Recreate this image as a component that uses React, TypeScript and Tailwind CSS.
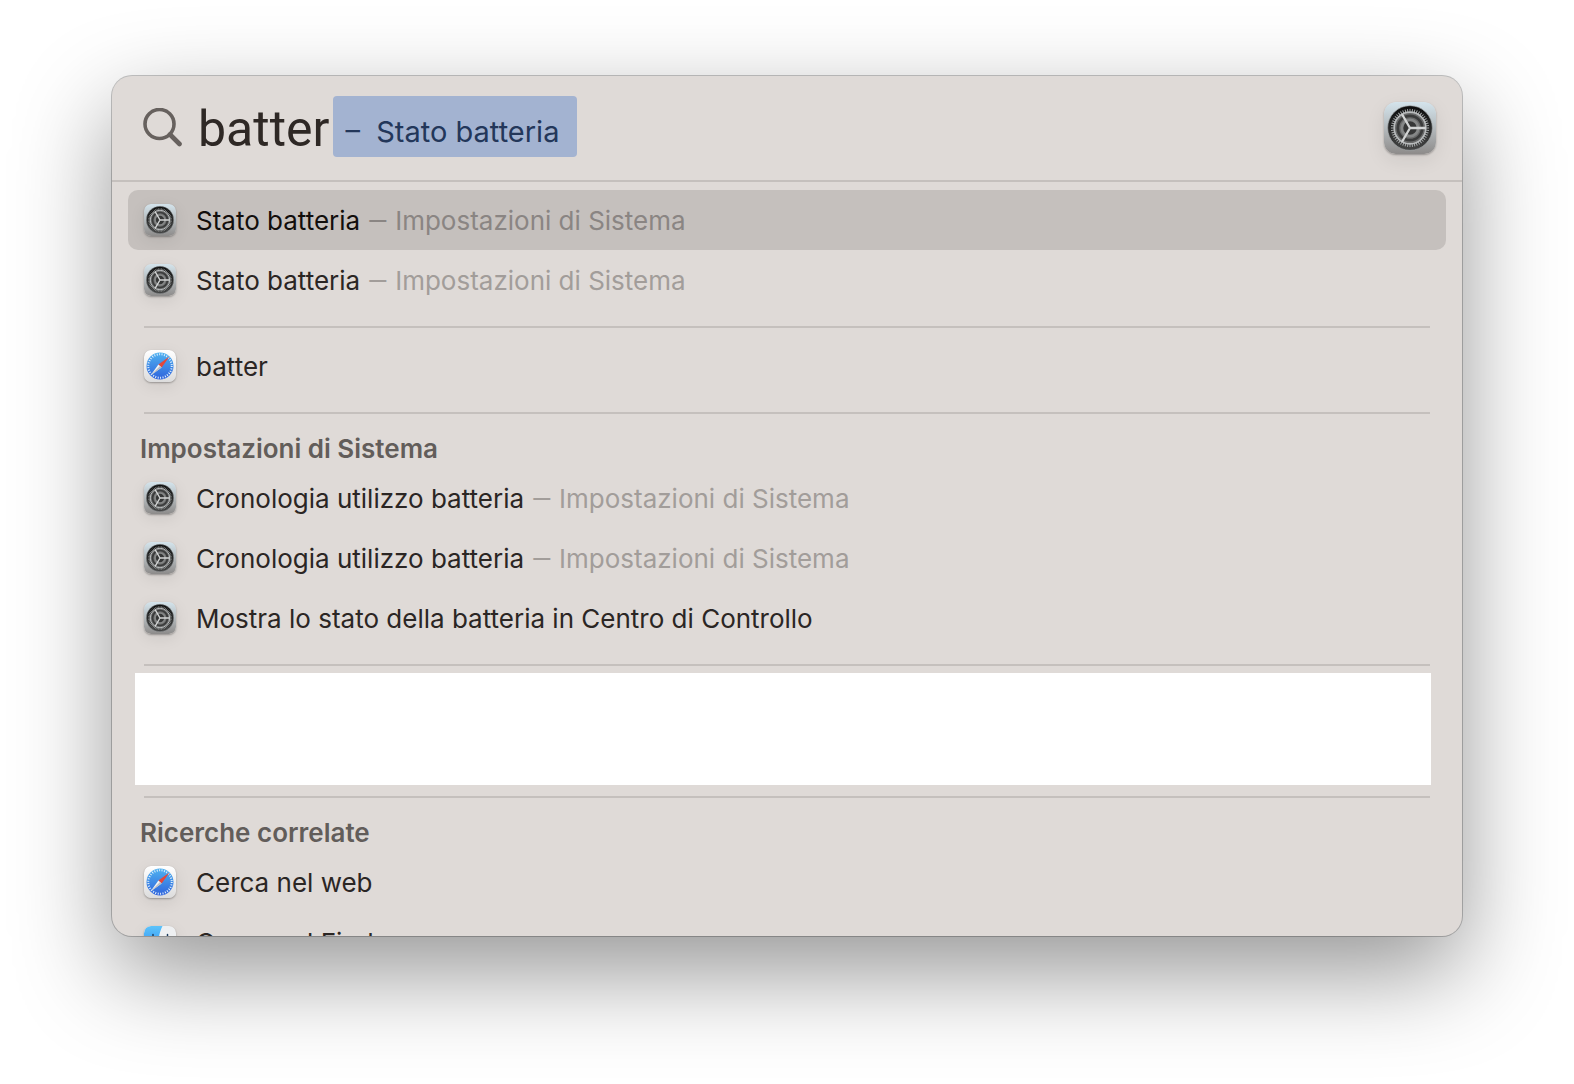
import { useId, useState } from "react";

const teeth = Array.from({ length: 48 }, (_, i) => (i * 360) / 48);

function SettingsIcon({ className }: { className: string }) {
  const id = useId();
  return (
    <svg viewBox="0 0 64 64" className={className} aria-hidden="true">
      <defs>
        <linearGradient id={id + "a"} x1="0" y1="0" x2="0" y2="1">
          <stop offset="0" stopColor="#d4e4ec" />
          <stop offset="0.5" stopColor="#b4babd" />
          <stop offset="1" stopColor="#8d8b8a" />
        </linearGradient>
        <linearGradient id={id + "b"} x1="0" y1="0" x2="0" y2="1">
          <stop offset="0" stopColor="#0c0d0d" />
          <stop offset="1" stopColor="#454646" />
        </linearGradient>
      </defs>
      <rect width="64" height="64" rx="14" fill={"url(#" + id + "a)"} />
      <circle cx="32" cy="32" r="27.500" fill={"url(#" + id + "b)"} stroke="#a5aaac" strokeWidth="0.8" />
      {teeth.map((angle) => (
        <path key={angle} d="M32 8.500V12" stroke="#a9acad" strokeWidth="1.2" transform={"rotate(" + angle + " 32 32)"} />
      ))}
      <circle cx="32" cy="32" r="19.500" fill="#6a6b6b" stroke="#b9bcbd" strokeWidth="2" />
      <circle cx="32" cy="32" r="15" fill="none" stroke="#3a3b3b" strokeWidth="3.4" />
      <circle cx="32" cy="32" r="10" fill="#363737" stroke="#858787" strokeWidth="3.4" />
      <path d="M32 32H51.500M32 32L22.200 15.100M32 32L22.200 48.900" stroke="#d2d4d4" strokeWidth="2.8" />
    </svg>
  );
}

function SafariIcon({ className }: { className: string }) {
  const id = useId();
  return (
    <svg viewBox="0 0 64 64" className={className} aria-hidden="true">
      <defs>
        <linearGradient id={id + "a"} x1="0" y1="0" x2="0" y2="1">
          <stop offset="0" stopColor="#ffffff" />
          <stop offset="1" stopColor="#dcdcdc" />
        </linearGradient>
        <linearGradient id={id + "b"} x1="0" y1="0" x2="0" y2="1">
          <stop offset="0" stopColor="#4fb2f0" />
          <stop offset="1" stopColor="#2f63dc" />
        </linearGradient>
      </defs>
      <rect width="64" height="64" rx="14" fill={"url(#" + id + "a)"} />
      <circle cx="32" cy="32" r="27" fill={"url(#" + id + "b)"} />
      <circle cx="32" cy="32" r="23.500" fill="none" stroke="#e3f0fc" strokeWidth="4" strokeDasharray="2 2.922" />
      <path d="M51 13L28.800 28.800L35.200 35.200Z" fill="#e5473a" />
      <path d="M13 51L28.800 28.800L35.200 35.200Z" fill="#f4f4f4" />
      <path d="M13 51L32 32L35.200 35.200Z" fill="#b9bcc2" />
    </svg>
  );
}

function FinderIcon({ className }: { className: string }) {
  const id = useId();
  return (
    <svg viewBox="0 0 64 64" className={className} aria-hidden="true">
      <defs>
        <clipPath id={id + "c"}>
          <rect width="64" height="64" rx="14" />
        </clipPath>
        <linearGradient id={id + "a"} x1="0" y1="0" x2="0" y2="1">
          <stop offset="0" stopColor="#5cc3fa" />
          <stop offset="1" stopColor="#1e7df0" />
        </linearGradient>
      </defs>
      <g clipPath={"url(#" + id + "c)"}>
        <rect width="64" height="64" fill="#eef0f2" />
        <path d="M0 0H37C31 12 29 24 28 36H36C36 46 37 56 39 64H0Z" fill={"url(#" + id + "a)"} />
        <path d="M18 17V23M47 17V23" stroke="#1c3a5c" strokeWidth="3" strokeLinecap="round" />
        <path d="M13 43C24 53 41 53 52 43" stroke="#1c3a5c" strokeWidth="2.5" strokeLinecap="round" fill="none" />
      </g>
    </svg>
  );
}

const icons = { settings: SettingsIcon, safari: SafariIcon, finder: FinderIcon };

type Result = { icon: keyof typeof icons; title: string; source?: string; selected?: boolean };

function ResultRow({ icon, title, source, selected }: Result) {
  const Icon = icons[icon];
  return (
    <li>
      <button
        type="button"
        aria-current={selected ? "true" : undefined}
        className={
          "flex h-15 w-full items-center gap-5 rounded-[10px] px-4 text-left whitespace-nowrap " +
          (selected ? "bg-[#c5c0bd] text-[#120e0c]" : "text-[#2b2624]")
        }
      >
        <Icon className="size-8 shrink-0 rounded-[7px] shadow-[0_1px_2px_rgba(0,0,0,0.3),0_4px_16px_rgba(0,0,0,0.08)]" />
        <span className="pt-0.5">
          {title}
          {source && (
            <span className={selected ? "text-[#8a8583]" : "text-[#a29d9a]"}>
              {" "}
              <span className="font-['Roboto',sans-serif]">—</span> {source}
            </span>
          )}
        </span>
      </button>
    </li>
  );
}

function Results({ items }: { items: Result[] }) {
  return (
    <ul>
      {items.map((item, i) => (
        <ResultRow key={i} {...item} />
      ))}
    </ul>
  );
}

function Divider() {
  return <hr className="mx-4 border-t-2 border-[#c5c0bd]" />;
}

function SectionTitle({ children }: { children: string }) {
  return <h2 className="flex h-[54px] items-center px-3 pt-4 font-semibold text-[#625d5a]">{children}</h2>;
}

const system = "Impostazioni di Sistema";

export default function App() {
  const [query, setQuery] = useState("batter");
  return (
    <div className="min-h-screen bg-white px-28 pt-19 pb-37 font-['Inter',sans-serif] text-[26px] leading-8">
      <main className="h-[calc(100vh-224px)] overflow-hidden rounded-[20px] bg-[#dfdad7] shadow-[0_0_0_1px_rgba(0,0,0,0.22),0_36px_96px_rgba(0,0,0,0.42)]">
        <header className="flex h-26 items-center px-[26px]">
          <svg viewBox="0 0 40 40" className="ml-1 size-10 shrink-0" fill="none" stroke="#67615e" aria-hidden="true">
            <circle cx="17.500" cy="16" r="14.500" strokeWidth="3.6" />
            <path d="M28 26.500L37.500 36" strokeWidth="4.6" strokeLinecap="round" />
          </svg>
          <input
            type="text"
            aria-label="Ricerca Spotlight"
            value={query}
            onChange={(e) => setQuery(e.target.value)}
            className="mt-0.5 ml-4 field-sizing-content h-16 font-['Roboto',sans-serif] text-[50px] leading-16 text-[#2e2825] outline-none"
          />
          <span className="mb-1 ml-1 flex h-[61px] items-center rounded bg-[#a3b3d1] pt-3 pr-[18px] pl-3 text-[29px] whitespace-pre text-[#23375a]">
            –  Stato batteria
          </span>
          <SettingsIcon className="ml-auto size-[52px] shrink-0 rounded-[12px] shadow-[0_1px_2px_rgba(0,0,0,0.3),0_6px_20px_rgba(0,0,0,0.08)]" />
        </header>
        <hr className="border-t-2 border-[#c5c0bd]" />
        <div className="flex flex-col px-4 pt-2">
          <Results
            items={[
              { icon: "settings", title: "Stato batteria", source: system, selected: true },
              { icon: "settings", title: "Stato batteria", source: system },
            ]}
          />
          <div className="pt-4 pb-2">
            <Divider />
          </div>
          <Results items={[{ icon: "safari", title: "batter" }]} />
          <section className="pt-4">
            <Divider />
            <SectionTitle>{system}</SectionTitle>
            <Results
              items={[
                { icon: "settings", title: "Cronologia utilizzo batteria", source: system },
                { icon: "settings", title: "Cronologia utilizzo batteria", source: system },
                { icon: "settings", title: "Mostra lo stato della batteria in Centro di Controllo" },
              ]}
            />
          </section>
          <div className="pt-4">
            <Divider />
          </div>
          <div className="mt-[7px] mr-[15px] mb-[11px] ml-[7px] h-28 bg-white" />
          <section>
            <Divider />
            <SectionTitle>Ricerche correlate</SectionTitle>
            <Results
              items={[
                { icon: "safari", title: "Cerca nel web" },
                { icon: "finder", title: "Cerca nel Finder" },
              ]}
            />
          </section>
        </div>
      </main>
    </div>
  );
}
